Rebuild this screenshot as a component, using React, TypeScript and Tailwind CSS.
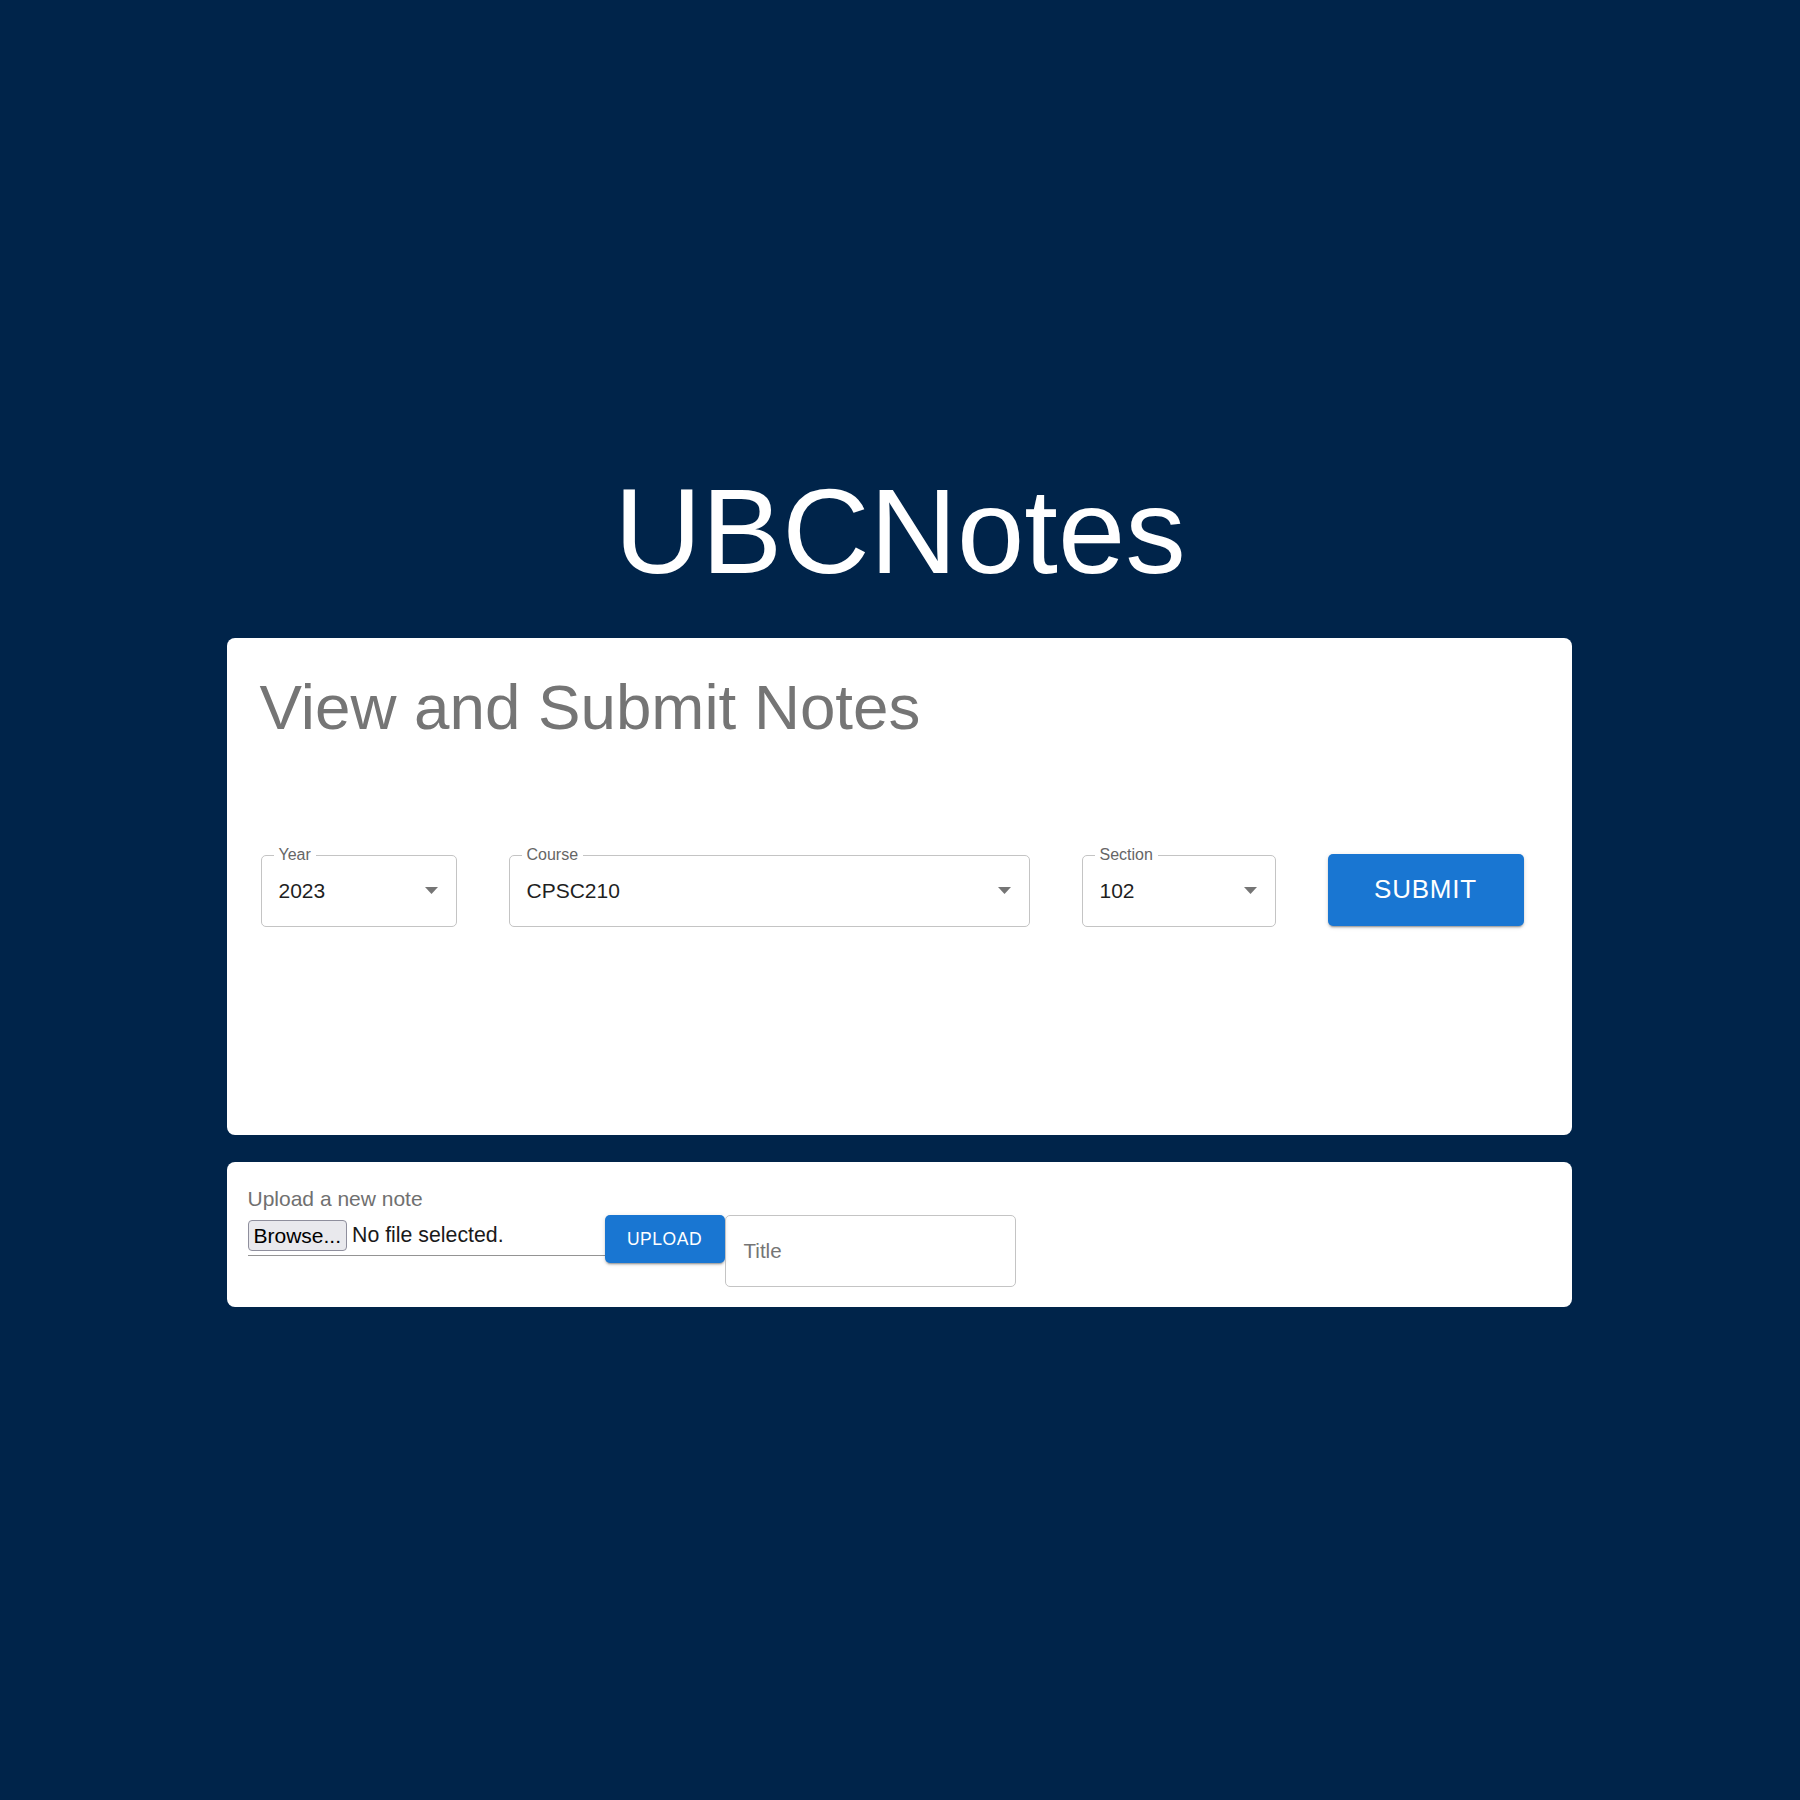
import React from "react";

const Arrow = () => (
  <svg width="13" height="7" viewBox="0 0 13 7" className="shrink-0">
    <path d="M0 0 L13 0 L6.5 7 Z" fill="#757575" />
  </svg>
);

const F = "font-['Liberation_Sans',Arial,Helvetica,sans-serif]";

function SelectBox({ label, value, width }: { label: string; value: string; width: string }) {
  return (
    <div className={`relative ${width} h-[72px] shrink-0 rounded-[5px] border border-[#c4c4c4] flex items-center justify-between pl-[17px] pr-[18px]`}>
      <span className={`absolute left-[12px] -top-[11px] bg-white px-[5px] text-[16px] leading-[20px] text-[#666666] ${F}`}>
        {label}
      </span>
      <span className={`text-[21px] leading-none text-[#1f1f1f] ${F}`}>{value}</span>
      <Arrow />
    </div>
  );
}

export default function App() {
  return (
    <div className={`min-h-[1800px] w-full bg-[#00244a] flex flex-col items-center ${F}`}>
      <h1 className="pt-[471px] text-[121px] leading-none text-white font-normal">
        UBCNotes
      </h1>

      <div className="mt-[46px] -translate-x-px w-[1345px] h-[497px] bg-white rounded-[8px] pt-[37px] px-[34px]">
        <h2 className="-ml-[1px] text-[63.7px] leading-none text-[#757575] font-normal">
          View and Submit Notes
        </h2>
        <div className="mt-[116px] flex items-start gap-[52px]">
          <SelectBox label="Year" value="2023" width="w-[196px]" />
          <SelectBox label="Course" value="CPSC210" width="w-[521px]" />
          <SelectBox label="Section" value="102" width="w-[194px]" />
          <button className="-mt-px w-[196px] h-[72px] shrink-0 rounded-[5px] bg-[#1976d2] text-white text-[26px] font-normal tracking-[0.03em] shadow-[0_3px_1px_-2px_rgba(0,0,0,0.2),0_2px_2px_0_rgba(0,0,0,0.14),0_1px_5px_0_rgba(0,0,0,0.12)]">
            SUBMIT
          </button>
        </div>
      </div>

      <div className="mt-[27px] -translate-x-px w-[1345px] h-[145px] bg-white rounded-[8px] pt-[26px] pl-[21px] flex items-start">
        <div className="w-[357px] shrink-0">
          <div className="text-[21px] leading-none h-[21px] text-[#707070]">
            Upload a new note
          </div>
          <div className="mt-[11px] h-[36px] border-b border-[#949494] flex items-start">
            <span className="h-[31px] rounded-[4px] border border-[#8f8f9d] bg-[#e9e9ed] px-[5px] flex items-center text-[21px] leading-none text-black">
              Browse...
            </span>
            <span className="ml-[5px] h-[31px] flex items-center text-[21.3px] leading-none text-[#1a1a1a]">
              No file selected.
            </span>
          </div>
        </div>
        <button className="mt-[27px] w-[120px] h-[48px] shrink-0 rounded-[5px] bg-[#1976d2] text-white text-[17.5px] font-normal tracking-[0.03em] shadow-[0_3px_1px_-2px_rgba(0,0,0,0.2),0_2px_2px_0_rgba(0,0,0,0.14),0_1px_5px_0_rgba(0,0,0,0.12)]">
          UPLOAD
        </button>
        <div className="mt-[27px] w-[291px] h-[72px] shrink-0 rounded-[5px] border border-[#c4c4c4] flex items-center pl-[18px]">
          <span className="text-[20.6px] leading-none text-[#757575]">Title</span>
        </div>
      </div>
    </div>
  );
}
